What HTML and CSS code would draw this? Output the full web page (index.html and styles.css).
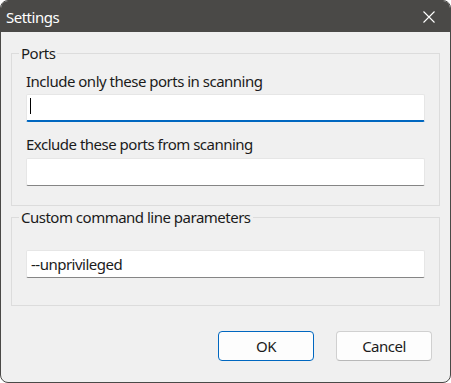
FILE: index.html
```html
<!DOCTYPE html>
<html lang="en">
<head>
  <meta charset="UTF-8">
  <title>Settings</title>
  <link rel="stylesheet" href="styles.css">
</head>
<body>
<div class="window">

  <!-- title bar -->
  <div class="titlebar">
    <span class="title">Settings</span>
    <svg class="close" width="12" height="12" viewBox="0 0 12 12">
      <path d="M0.5 0.5 L11.5 11.5 M11.5 0.5 L0.5 11.5" stroke="#ffffff" stroke-width="1.1" fill="none"/>
    </svg>
  </div>

  <div class="content">
    <fieldset class="group">
      <legend>Ports</legend>
      <label class="field-label">Include only these ports in scanning</label>
      <div class="field focused">
        <input type="text" class="textbox">
        <span class="caret"></span>
      </div>
      <label class="field-label second">Exclude these ports from scanning</label>
      <div class="field">
        <input type="text" class="textbox">
      </div>
    </fieldset>

    <fieldset class="group params">
      <legend>Custom command line parameters</legend>
      <div class="field">
        <input type="text" class="textbox" value="--unprivileged">
      </div>
    </fieldset>

    <div class="buttons">
      <button class="btn default">OK</button>
      <button class="btn">Cancel</button>
    </div>
  </div>

</div>
</body>
</html>
```

FILE: styles.css
```css
body { margin: 0; background: #ffffff; font-family: "Noto Sans", "Open Sans", sans-serif; font-size: 15px; letter-spacing: -0.5px; color: #1b1b1b; }
.window {
  width: 451px; height: 383px; box-sizing: border-box;
  border: 1px solid #4a4947; border-radius: 8px; overflow: hidden;
  background: #f0f0f0; display: flex; flex-direction: column;
}
.titlebar {
  height: 31px; background: #4a4947; color: #ffffff;
  display: flex; align-items: center; justify-content: space-between;
  padding: 0 15px 0 5px; flex-shrink: 0;
}
.title { font-size: 15px; line-height: 20px; }
.close { display: block; }

.content { padding: 0 10px 0 10px; }
.group {
  margin: 11px 0 0 0; padding: 8px 14px 19px 14px;
  border: 1px solid #dcdcdc; min-width: 0;
}
.group legend { padding: 0 2px; margin-left: -7px; line-height: 20px; }
.params { margin-top: 1px; padding-top: 23px; padding-bottom: 27px; }

.field-label { display: block; line-height: 20px; margin-bottom: 3px; }
.field-label.second { margin-top: 12px; margin-bottom: 4px; }

.field { position: relative; }
.textbox {
  display: block; width: 100%; box-sizing: border-box; height: 28px;
  border: 1px solid #e6e6e6; border-bottom: 1px solid #858585; border-radius: 2px;
  background: #ffffff; padding: 0 4px; margin: 0;
  font-family: inherit; font-size: 15px; letter-spacing: inherit; color: #1b1b1b; outline: none;
}
.focused .textbox { border-bottom: 2px solid #0067c0; }
.caret { position: absolute; left: 4px; top: 4px; width: 1px; height: 16px; background: #000000; }

.buttons { display: flex; justify-content: flex-end; gap: 22px; margin-top: 25px; padding-right: 8px; }
.btn {
  width: 96px; height: 30px; box-sizing: border-box;
  border: 1px solid #d0d0d0; border-bottom-color: #b8b8b8; border-radius: 4px;
  background: #fdfdfd; font-family: inherit; font-size: 15px; letter-spacing: inherit; color: #1b1b1b; padding: 0;
}
.btn.default { border-color: #0067c0; }
```
